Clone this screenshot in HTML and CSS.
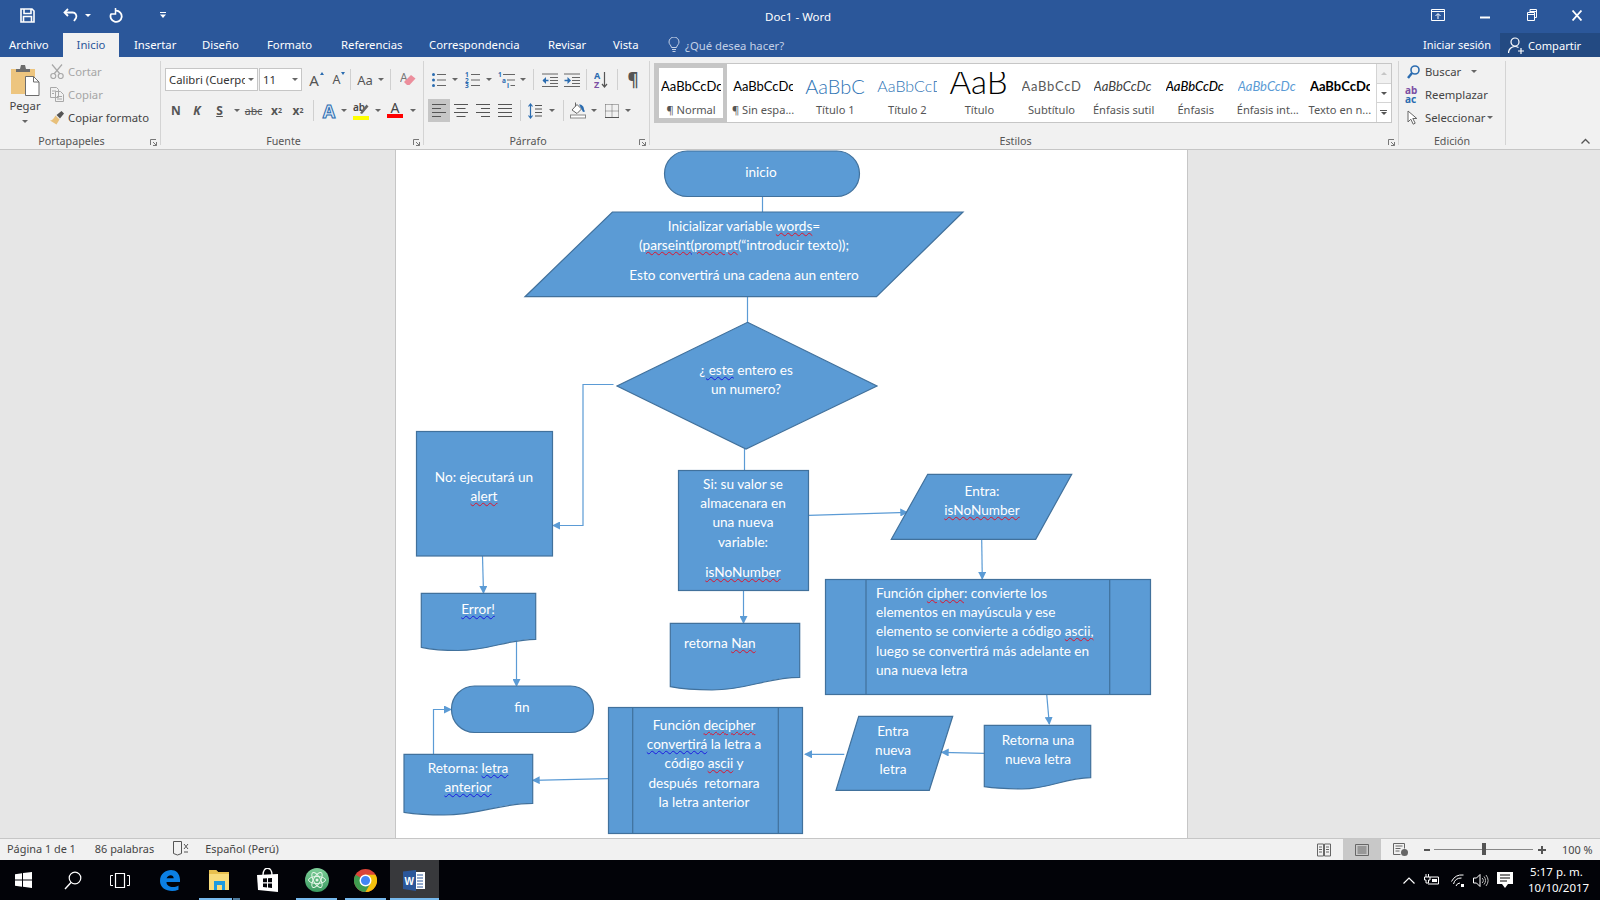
FILE: index.html
```html
<!DOCTYPE html>
<html>
<head>
  <meta charset="utf-8">
  <link rel="stylesheet" href="styles.css">
</head>
<body>
  <!-- Title bar -->
  <div class="titlebar">
    <div class="qat">
      <svg class="qat-save" width="15" height="15" viewBox="0 0 15 15"><path d="M1 1h11l2 2v11H1z M4 1v4.500h7V1 M3.500 14V8.500h8V14" fill="none" stroke="#fff" stroke-width="1.600"/></svg>
      <svg class="qat-undo" width="15" height="14" viewBox="0 0 15 14"><path d="M5 1L1.500 4.500 5 8" fill="none" stroke="#fff" stroke-width="1.800"/><path d="M2 4.500h7.500a3.800 3.800 0 0 1 3.500 5.500L11 13" fill="none" stroke="#fff" stroke-width="1.800"/></svg>
      <i class="caret caret-white qat-caret"></i>
      <svg class="qat-redo" width="14" height="15" viewBox="0 0 14 15"><path d="M7 2.700a5.600 5.600 0 1 1-5 3.300" fill="none" stroke="#fff" stroke-width="1.800"/><path d="M6.500 0v6H1.500" fill="none" stroke="#fff" stroke-width="1.500"/></svg>
      <svg class="qat-more" width="6" height="6" viewBox="0 0 6 6"><path d="M0 0.500h6" stroke="#fff"/><path d="M0 2.500h6L3 6z" fill="#fff"/></svg>
    </div>
    <div class="doc-title">Doc1 - Word</div>
    <div class="win-buttons">
      <svg width="14" height="12" viewBox="0 0 14 12"><path d="M0.500 0.500h13v11h-13z M0.500 2.500h13" fill="none" stroke="#fff"/><path d="M7 10V5M4.500 7L7 4.500 9.500 7" fill="none" stroke="#fff"/></svg>
      <svg class="win-min" width="10" height="10" viewBox="0 0 10 10"><path d="M0 7.500h10" stroke="#fff" stroke-width="2"/></svg>
      <svg class="win-max" width="10" height="12" viewBox="0 0 10 12"><path d="M0.500 3.500h7v8h-7z M0.500 5.500h7 M3 3.500v-3h6.500v8h-2 M3 2.500h6.500" fill="none" stroke="#fff"/></svg>
      <svg class="win-close" width="10" height="11" viewBox="0 0 10 11"><path d="M0.500 0.500l9 10M9.500 0.500l-9 10" stroke="#fff" stroke-width="1.800"/></svg>
    </div>
  </div>

  <!-- Tabs -->
  <div class="tabs">
    <span class="tab tab-archivo">Archivo</span>
    <span class="tab tab-active">Inicio</span>
    <span class="tab tab-insertar">Insertar</span>
    <span class="tab tab-diseno">Diseño</span>
    <span class="tab tab-formato">Formato</span>
    <span class="tab tab-refs">Referencias</span>
    <span class="tab tab-corr">Correspondencia</span>
    <span class="tab tab-revisar">Revisar</span>
    <span class="tab tab-vista">Vista</span>
    <span class="tell-me">
      <svg width="12" height="16" viewBox="0 0 12 16"><path d="M3.500 10.500C3 8 1 7.500 1 5a5 5 0 0 1 10 0c0 2.500-2 3-2.500 5.500z M4 12.500h4M4.500 14.500h3" fill="none" stroke="#c3d0e6"/></svg>
      ¿Qué desea hacer?
    </span>
    <span class="signin">Iniciar sesión</span>
    <span class="share">
      <svg width="16" height="17" viewBox="0 0 16 17"><circle cx="7" cy="5" r="4" fill="none" stroke="#fff" stroke-width="1.200"/><path d="M0.500 16c0-4 3-6.500 6.500-6.500 1.500 0 2.500.4 3.500 1M10 14h6M13 11v6" fill="none" stroke="#fff" stroke-width="1.200"/></svg>
      Compartir
    </span>
  </div>

  <!-- Ribbon -->
  <div class="ribbon">
    <div class="group group-clip">
      <div class="clip-body">
        <div class="paste">
          <svg width="30" height="31" viewBox="0 0 30 31"><path d="M1 4h24v25H1z" fill="#edc57f"/><path d="M6 4h4l1-4h4l1 4h4v3H6z" fill="#6d6d6d"/><path d="M15.500 11.500h8l5.500 5.500v13.500H15.500z" fill="#fff" stroke="#6d6d6d"/><path d="M23.500 11.500V17H29" fill="none" stroke="#6d6d6d"/></svg>
          <span class="paste-label">Pegar</span>
          <i class="caret"></i>
        </div>
        <div class="clip-list">
          <div class="clip-item clip-off">
            <svg width="14" height="15" viewBox="0 0 14 15"><path d="M2 0.500l8 9.500M12 0.500L4 10" stroke="#a8a8a8" stroke-width="1.200"/><circle cx="3.300" cy="12" r="2.500" fill="none" stroke="#a8a8a8" stroke-width="1.200"/><circle cx="10.700" cy="12" r="2.500" fill="none" stroke="#a8a8a8" stroke-width="1.200"/></svg>
            Cortar
          </div>
          <div class="clip-item clip-off">
            <svg width="14" height="15" viewBox="0 0 14 15"><path d="M0.500 0.500h6l2 2v8h-8z M5.500 4.500h5l3 3v7h-8z M2 4h4M2 6.500h2M7 9.500h5M7 12h5" fill="none" stroke="#a8a8a8"/></svg>
            Copiar
          </div>
          <div class="clip-item">
            <svg width="14" height="14" viewBox="0 0 14 14"><path d="M5.500 4.500l4 4-3 5L0 9.500c2 0 4-2 5.500-5z" fill="#e8c07a"/><path d="M6.500 4L11.500 0 14 2.500 10 7.500z" fill="#555"/></svg>
            Copiar formato
          </div>
        </div>
      </div>
      <div class="group-label">Portapapeles</div>
      <svg class="launcher" width="7" height="7" viewBox="0 0 7 7"><path d="M0.500 6V0.500H6" fill="none" stroke="#777"/><path d="M3 3l3.500 3.500M3 6.500h3.500V3" fill="none" stroke="#777"/></svg>
    </div>

    <div class="group group-font">
      <div class="tool-row font-row-1">
        <div class="combo">Calibri (Cuerpo<i class="combo-caret"></i></div>
        <div class="combo combo-size">11<i class="combo-caret"></i></div>
        <span class="cell glyph-a">A<i class="mini-up"></i></span>
        <span class="cell glyph-a glyph-small">A<i class="mini-down"></i></span>
        <span class="cell"><i class="tsep"></i></span>
        <span class="cell glyph-aa">Aa</span>
        <span class="cell"><i class="caret"></i></span>
        <span class="cell"><i class="tsep"></i></span>
        <span class="cell">
          <svg width="16" height="17" viewBox="0 0 16 17"><text x="0" y="11" class="ico-eraser">A</text><path d="M4 11l7-7 4.500 3.500-6 6.500H7z" fill="#ec8e9c"/></svg>
        </span>
      </div>
      <div class="tool-row font-row-2">
        <span class="cell fmt">N</span>
        <span class="cell fmt fmt-i">K</span>
        <span class="cell fmt fmt-u">S</span>
        <span class="cell"><i class="caret"></i></span>
        <span class="cell fmt-abc">abc</span>
        <span class="cell fmt fmt-sub">x<sub>2</sub></span>
        <span class="cell fmt fmt-sub">x<sup>2</sup></span>
        <span class="cell"><i class="tsep"></i></span>
        <span class="cell fmt-effect">A</span>
        <span class="cell"><i class="caret"></i></span>
        <span class="cell">
          <svg width="16" height="18" viewBox="0 0 16 18"><text x="0" y="9" class="ico-ab">ab</text><path d="M7 11l6.500-8.500 2 2L9 12z" fill="#666"/><rect x="0" y="14" width="16" height="4" fill="#ffff00"/></svg>
        </span>
        <span class="cell"><i class="caret"></i></span>
        <span class="cell color-a">A</span>
        <span class="cell"><i class="caret"></i></span>
      </div>
      <div class="group-label">Fuente</div>
      <svg class="launcher" width="7" height="7" viewBox="0 0 7 7"><path d="M0.500 6V0.500H6" fill="none" stroke="#777"/><path d="M3 3l3.500 3.500M3 6.500h3.500V3" fill="none" stroke="#777"/></svg>
    </div>

    <div class="group group-para">
      <div class="tool-row para-row-1">
        <span class="cell">
          <svg width="14" height="14" viewBox="0 0 14 14"><circle cx="1.500" cy="1.500" r="1.500" fill="#2b6cb0"/><circle cx="1.500" cy="7" r="1.500" fill="#2b6cb0"/><circle cx="1.500" cy="12.500" r="1.500" fill="#2b6cb0"/><path d="M5 1.500h9M5 7h9M5 12.500h9" stroke="#666"/></svg>
        </span>
        <span class="cell"><i class="caret"></i></span>
        <span class="cell">
          <svg width="15" height="16" viewBox="0 0 15 16"><text x="0" y="5" class="ico-num">1</text><text x="0" y="10.500" class="ico-num">2</text><text x="0" y="16" class="ico-num">3</text><path d="M6 2.500h9M6 8h9M6 13.500h9" stroke="#666"/></svg>
        </span>
        <span class="cell"><i class="caret"></i></span>
        <span class="cell">
          <svg width="17" height="16" viewBox="0 0 17 16"><text x="0" y="5" class="ico-num">1</text><text x="4" y="10.500" class="ico-num">a</text><text x="9" y="16" class="ico-num">i</text><path d="M5 2.500h12M9 8h8M12.500 13.500h4.500" stroke="#666"/></svg>
        </span>
        <span class="cell"><i class="caret"></i></span>
        <span class="cell"><i class="tsep"></i></span>
        <span class="cell">
          <svg width="16" height="14" viewBox="0 0 16 14"><path d="M0 1h16M8 4.500h8M8 7.500h8M8 10.500h8M0 13.500h16" stroke="#666"/><path d="M6.500 7.500H1" stroke="#2b6cb0" stroke-width="1.500"/><path d="M4 4L0.500 7.500 4 11z" fill="#2b6cb0"/></svg>
        </span>
        <span class="cell">
          <svg width="16" height="14" viewBox="0 0 16 14"><path d="M0 1h16M8 4.500h8M8 7.500h8M8 10.500h8M0 13.500h16" stroke="#666"/><path d="M0.500 7.500H5" stroke="#2b6cb0" stroke-width="1.500"/><path d="M3.500 4L7 7.500 3.500 11z" fill="#2b6cb0"/></svg>
        </span>
        <span class="cell"><i class="tsep"></i></span>
        <span class="cell">
          <svg width="14" height="18" viewBox="0 0 14 18"><text x="0" y="8" class="ico-sort-a">A</text><text x="0" y="17" class="ico-sort-z">Z</text><path d="M10.500 1v15M8 13l2.500 3 2.500-3" fill="none" stroke="#555" stroke-width="1.200"/></svg>
        </span>
        <span class="cell"><i class="tsep"></i></span>
        <span class="cell pilcrow">¶</span>
      </div>
      <div class="tool-row para-row-2">
        <span class="cell cell-on">
          <svg width="14" height="13" viewBox="0 0 14 13"><path d="M0 0.500h14M0 4.500h9M0 8.500h14M0 12.500h9" stroke="#555"/></svg>
        </span>
        <span class="cell">
          <svg width="14" height="13" viewBox="0 0 14 13"><path d="M0 0.500h14M2.500 4.500h9M0 8.500h14M2.500 12.500h9" stroke="#555"/></svg>
        </span>
        <span class="cell">
          <svg width="14" height="13" viewBox="0 0 14 13"><path d="M0 0.500h14M5 4.500h9M0 8.500h14M5 12.500h9" stroke="#555"/></svg>
        </span>
        <span class="cell">
          <svg width="14" height="13" viewBox="0 0 14 13"><path d="M0 0.500h14M0 4.500h14M0 8.500h14M0 12.500h14" stroke="#555"/></svg>
        </span>
        <span class="cell"><i class="tsep"></i></span>
        <span class="cell">
          <svg width="14" height="16" viewBox="0 0 14 16"><path d="M2.500 1v14M0.500 3.500l2-2.500 2 2.500M0.500 12.500l2 2.500 2-2.500" fill="none" stroke="#2b6cb0" stroke-width="1.200"/><path d="M7 2.500h7M7 6h7M7 9.500h7M7 13h7" stroke="#555"/></svg>
        </span>
        <span class="cell"><i class="caret"></i></span>
        <span class="cell"><i class="tsep"></i></span>
        <span class="cell">
          <svg width="16" height="17" viewBox="0 0 16 17"><path d="M2 8l5-5.500L11.500 7 7 11.500z" fill="#fff" stroke="#666"/><path d="M5.500 0.500v4" stroke="#666"/><path d="M9 2.500c3 0 5 2 5 5l1 2-2 .5-1.500-3z" fill="#2b6cb0"/><rect x="0.500" y="13" width="15" height="3" fill="#fff" stroke="#888"/></svg>
        </span>
        <span class="cell"><i class="caret"></i></span>
        <span class="cell">
          <svg width="14" height="14" viewBox="0 0 14 14"><path d="M0.500 0.500h13v13M0.500 0.500v13M7 0.500v13M0.500 7h13" fill="none" stroke="#666" stroke-dasharray="1 1"/><path d="M0 13.500h14" stroke="#555"/></svg>
        </span>
        <span class="cell"><i class="caret"></i></span>
      </div>
      <div class="group-label">Párrafo</div>
      <svg class="launcher" width="7" height="7" viewBox="0 0 7 7"><path d="M0.500 6V0.500H6" fill="none" stroke="#777"/><path d="M3 3l3.500 3.500M3 6.500h3.500V3" fill="none" stroke="#777"/></svg>
    </div>

    <div class="group group-styles">
      <div class="gallery">
        <div class="style-item style-on"><div class="preview">AaBbCcDc</div><div class="style-name">¶ Normal</div></div>
        <div class="style-item"><div class="preview">AaBbCcDc</div><div class="style-name">¶ Sin espa...</div></div>
        <div class="style-item"><div class="preview pv-t1">AaBbCc</div><div class="style-name">Título 1</div></div>
        <div class="style-item"><div class="preview pv-t2">AaBbCcD</div><div class="style-name">Título 2</div></div>
        <div class="style-item"><div class="preview pv-title">AaB</div><div class="style-name">Título</div></div>
        <div class="style-item"><div class="preview pv-sub">AaBbCcD</div><div class="style-name">Subtítulo</div></div>
        <div class="style-item"><div class="preview pv-subtle">AaBbCcDc</div><div class="style-name">Énfasis sutil</div></div>
        <div class="style-item"><div class="preview pv-emph">AaBbCcDc</div><div class="style-name">Énfasis</div></div>
        <div class="style-item"><div class="preview pv-int">AaBbCcDc</div><div class="style-name">Énfasis int...</div></div>
        <div class="style-item"><div class="preview pv-strong">AaBbCcDc</div><div class="style-name">Texto en n...</div></div>
        <div class="gallery-scroll">
          <span class="scroll-btn scroll-off"><i class="tri-up"></i></span>
          <span class="scroll-btn"><i class="caret"></i></span>
          <span class="scroll-btn"><i class="more-bar"></i><i class="caret"></i></span>
        </div>
      </div>
      <div class="group-label">Estilos</div>
      <svg class="launcher" width="7" height="7" viewBox="0 0 7 7"><path d="M0.500 6V0.500H6" fill="none" stroke="#777"/><path d="M3 3l3.500 3.500M3 6.500h3.500V3" fill="none" stroke="#777"/></svg>
    </div>

    <div class="group group-edit">
      <div class="edit-list">
        <div class="edit-item">
          <span class="edit-icon"><svg width="13" height="14" viewBox="0 0 13 14"><circle cx="8" cy="5" r="4" fill="none" stroke="#2b6cb0" stroke-width="1.600"/><path d="M5 8l-4 5" stroke="#2b6cb0" stroke-width="2.400"/></svg></span>
          Buscar<i class="caret edit-caret-wide"></i>
        </div>
        <div class="edit-item">
          <span class="edit-icon edit-ab"><b class="ab-top">ab</b><b class="ab-bottom">ac</b></span>
          Reemplazar
        </div>
        <div class="edit-item">
          <span class="edit-icon"><svg width="11" height="15" viewBox="0 0 11 15"><path d="M1 1v11l2.800-2.800 2.400 5 2-1-2.400-4.700h4z" fill="#fff" stroke="#666"/></svg></span>
          Seleccionar<i class="caret edit-caret"></i>
        </div>
      </div>
      <div class="group-label">Edición</div>
    </div>
    <svg class="collapse" width="9" height="6" viewBox="0 0 9 6"><path d="M0.500 5.500l4-4 4 4" fill="none" stroke="#555" stroke-width="1.300"/></svg>
  </div>

  <!-- Document area -->
  <div class="workspace">
    <div class="page">
      <svg class="diagram" width="791" height="688" viewBox="396 150 791 688">
        <defs>
          <marker id="arrow" markerWidth="8" markerHeight="8" refX="7" refY="4" orient="auto" markerUnits="userSpaceOnUse">
            <path d="M0 0L8 4 0 8z" fill="#5b9bd5"/>
          </marker>
        </defs>

        <g class="links">
          <path d="M762.5 196V212"/>
          <path d="M747.5 297V322"/>
          <path d="M744.5 449V470"/>
          <path d="M613.5 384.5H583V525.5H553" marker-end="url(#arrow)"/>
          <path d="M482.5 556L483.5 593" marker-end="url(#arrow)"/>
          <path d="M516.5 639V686" marker-end="url(#arrow)"/>
          <path d="M433.5 754V709.5H451" marker-end="url(#arrow)"/>
          <path d="M743.5 591V623" marker-end="url(#arrow)"/>
          <path d="M808.7 515.3L907.3 512.3" marker-end="url(#arrow)"/>
          <path d="M981.7 539.3L982.3 579" marker-end="url(#arrow)"/>
          <path d="M1046.7 694.3L1049.3 724" marker-end="url(#arrow)"/>
          <path d="M984 753.3L941.7 752.3" marker-end="url(#arrow)"/>
          <path d="M844.3 754.3H805" marker-end="url(#arrow)"/>
          <path d="M608 778.7L532.7 780.3" marker-end="url(#arrow)"/>
        </g>

        <g class="shapes">
          <rect x="664.5" y="151" width="195" height="45.5" rx="22.7"/>
          <path d="M612.4 212H963L876.5 296.7H525z"/>
          <path d="M747.5 322.3L877 386 746 449 617 386z"/>
          <rect x="416.5" y="431.5" width="136" height="124.5"/>
          <rect x="678.5" y="470.5" width="130" height="120"/>
          <path d="M927.7 474.3H1071.7L1035.7 539.3H891.3z"/>
          <path d="M421.3 593.3H535.7V639.3C506 639.5 490 650.5 458 650.5C444 650.5 432 649.5 421.3 647.3z"/>
          <path d="M670.3 623.3H799.7V677.3C766 677.5 748 690 712 690C696 690 682 689 670.3 686.7z"/>
          <rect x="825.5" y="579.5" width="325" height="115"/>
          <path d="M866 579.5V694.5M1109.7 579.5V694.5"/>
          <rect x="451.5" y="686" width="142" height="46.5" rx="23"/>
          <path d="M404 754.3H532.7V803.3C498 803.5 480 815 444 815C428 815 415 814 404 812.3z"/>
          <rect x="608.5" y="707.5" width="194" height="126"/>
          <path d="M632.7 707.5V833.5M778.3 707.5V833.5"/>
          <path d="M858.7 716.3H952.7L929.3 790.3H836z"/>
          <path d="M984.3 725.3H1090.7V777.7C1064 777.9 1050 789 1022 789C1008 789 996 788.5 984.3 786.7z"/>
        </g>
      </svg>

      <div class="label lb-center lb-inicio">inicio</div>
      <div class="label lb-center lb-init">
        Inicializar variable <span class="sp-r">words</span>=<br>
        (<span class="sp-r">parseint</span><span class="sp-b">(</span><span class="sp-r">prompt</span>(“introducir texto));
        <div class="gap"></div>
        Esto convertirá una cadena aun entero
      </div>
      <div class="label lb-center lb-diamond"><span class="sp-b">¿ este</span> entero es<br>un numero?</div>
      <div class="label lb-center lb-no">No: ejecutará un<br><span class="sp-r">alert</span></div>
      <div class="label lb-center lb-si">
        Si: su valor se<br>almacenara en<br>una nueva<br>variable:
        <div class="gap"></div>
        <span class="sp-r">isNoNumber</span>
      </div>
      <div class="label lb-center lb-entra">Entra:<br><span class="sp-r">isNoNumber</span></div>
      <div class="label lb-center lb-error"><span class="sp-b">Error!</span></div>
      <div class="label lb-nan">retorna <span class="sp-r">Nan</span></div>
      <div class="label lb-cipher">
        Función <span class="sp-r">cipher</span>: convierte los<br>
        elementos en mayúscula y ese<br>
        elemento se convierte a código <span class="sp-r">ascii,</span><br>
        luego se convertirá más adelante en<br>
        una nueva letra
      </div>
      <div class="label lb-center lb-fin">fin</div>
      <div class="label lb-center lb-retletra">Retorna: <span class="sp-b">letra</span><br><span class="sp-b">anterior</span></div>
      <div class="label lb-center lb-decipher">
        Función <span class="sp-r">decipher</span><br>
        <span class="sp-b">convertirá</span> la letra a<br>
        código <span class="sp-r">ascii</span> y<br>
        después&nbsp; retornara<br>
        la letra anterior
      </div>
      <div class="label lb-center lb-nueva">Entra<br>nueva<br>letra</div>
      <div class="label lb-center lb-retuna">Retorna una<br>nueva letra</div>
    </div>
  </div>

  <!-- Status bar -->
  <div class="statusbar">
    <span class="st-page">Página 1 de 1</span>
    <span class="st-words">86 palabras</span>
    <svg class="st-book" width="16" height="15" viewBox="0 0 16 15"><path d="M0.500 0.500h8v12l-4 1.500-4-1.500z" fill="none" stroke="#555"/><path d="M11 3l4 5M15 3l-4 5M11 11h4" stroke="#555"/></svg>
    <span class="st-lang">Español (Perú)</span>
    <div class="st-right">
      <span class="view-btn">
        <svg width="14" height="14" viewBox="0 0 14 14"><path d="M0.500 1h6v12h-6zM7.500 1h6v12h-6zM2 4h3M2 6.500h3M2 9h3M9 4h3M9 6.500h3M9 9h3" fill="none" stroke="#666"/></svg>
      </span>
      <span class="view-btn view-on">
        <svg width="14" height="12" viewBox="0 0 14 12"><path d="M0.500 0.500h13v11h-13zM2.500 3h9M2.500 5h9M2.500 7h9M2.500 9h9" fill="none" stroke="#666"/></svg>
      </span>
      <span class="view-btn">
        <svg width="15" height="13" viewBox="0 0 15 13"><path d="M0.500 0.500h11v5M0.500 0.500v11h7M2.500 3h7M2.500 5.500h5M2.500 8h4" fill="none" stroke="#666"/><circle cx="11.500" cy="9.500" r="3.500" fill="#666"/></svg>
      </span>
      <div class="zoom-slider">
        <i class="zoom-minus"></i>
        <div class="zoom-track"><i class="zoom-thumb"></i></div>
        <i class="zoom-plus"></i>
      </div>
      <span class="st-zoom">100 %</span>
    </div>
  </div>

  <!-- Taskbar -->
  <div class="taskbar">
    <svg class="tb-win" width="17" height="16" viewBox="0 0 17 16"><path d="M0 2.300l7-1v6.200H0zM8 1.100L17 0v7.500H8zM0 8.500h7v6.200l-7-1zM8 8.500h9V16l-9-1.200z" fill="#fff"/></svg>
    <svg class="tb-search" width="18" height="19" viewBox="0 0 18 19"><circle cx="11" cy="7" r="5.800" fill="none" stroke="#fff" stroke-width="1.200"/><path d="M7 11.500L1 18" stroke="#fff" stroke-width="1.400"/></svg>
    <svg class="tb-tasks" width="20" height="15" viewBox="0 0 20 15"><path d="M5.500 0.500h9v14h-9z" fill="none" stroke="#fff" stroke-width="1.200"/><path d="M3 2.500H0.500v10H3M17 2.500h2.500v10H17" fill="none" stroke="#fff"/></svg>
    <div class="tb-app tb-edge">
      <svg width="20" height="21" viewBox="0 0 20 21"><path d="M20 12H6.500c0 5 7 6.500 12 3.500v4.300C10 23 0 19.500 0 11 0 3.500 6 0 11 0c5.500 0 9.500 4 9 12z" fill="#0b7fe3"/><path d="M6.500 8.300h7.200C13.700 4.500 8.500 3.800 6.500 8.300z" fill="#020308"/></svg>
    </div>
    <div class="tb-app tb-files tb-running">
      <svg width="22" height="22" viewBox="0 0 22 22"><path d="M1 1h7l2 2h11v18H1z" fill="#f8dc7c"/><path d="M1 1h7l2 2h11v2H1z" fill="#e8c04e"/><path d="M6 12h11v9h-3v-5H9v5H6z" fill="#1d9be0"/></svg>
    </div>
    <div class="tb-app tb-store">
      <svg width="21" height="24" viewBox="0 0 21 24"><path d="M0 7l21-1v18L1 22z" fill="#fff"/><path d="M6 7c0-9 9-9 9 0" fill="none" stroke="#fff" stroke-width="1.400"/><path d="M6 10.500l4-.2v4H6zM11 10.300l4-.2v4.200h-4zM6 15.500h4v4l-4-.4zM11 15.500h4v4.500l-4-.4z" fill="#020308"/></svg>
    </div>
    <div class="tb-app tb-atom tb-running">
      <svg width="24" height="24" viewBox="0 0 24 24">
        <defs><linearGradient id="atomfill" x1="0" y1="0" x2="0" y2="1"><stop offset="0" stop-color="#7fd09a"/><stop offset="1" stop-color="#3a9a60"/></linearGradient></defs>
        <circle cx="12" cy="12" r="12" fill="url(#atomfill)"/>
        <g fill="none" stroke="#e4f6e8"><ellipse cx="12" cy="12" rx="8.500" ry="3.500"/><ellipse cx="12" cy="12" rx="8.500" ry="3.500" transform="rotate(60 12 12)"/><ellipse cx="12" cy="12" rx="8.500" ry="3.500" transform="rotate(120 12 12)"/></g>
        <circle cx="12" cy="12" r="1.500" fill="#e4f6e8"/>
      </svg>
    </div>
    <div class="tb-app tb-chrome tb-running">
      <svg width="23" height="23" viewBox="0 0 24 24"><circle cx="12" cy="12" r="12" fill="#db4437"/><path d="M12 12L1.600 6A12 12 0 0 0 12 24l5-8z" fill="#3f9c4f"/><path d="M12 6h10.400A12 12 0 0 1 12 24l5-8.500z" fill="#f4c20d"/><circle cx="12" cy="12" r="5.500" fill="#4285f4" stroke="#fff" stroke-width="1.500"/></svg>
    </div>
    <div class="tb-app tb-word">
      <svg width="22" height="21" viewBox="0 0 22 21"><path d="M12 2h10v17H12z" fill="#fff"/><path d="M14 5h6M14 8h6M14 11h6M14 14h6M14 17h6" stroke="#2b579a"/><path d="M0 1.500L13 0v21L0 19z" fill="#2b579a"/><text x="1.500" y="14.500" class="tb-word-w">W</text></svg>
    </div>
    <div class="tray">
      <svg width="12" height="7" viewBox="0 0 12 7"><path d="M0.500 6.500L6 1l5.500 5.500" fill="none" stroke="#fff" stroke-width="1.200"/></svg>
      <svg class="tray-battery" width="16" height="12" viewBox="0 0 16 12"><path d="M2 0v3M4.500 0v3M0.500 3h5.500v3H4.500v3H2V6H0.500zM6 3h8.500v7H4" fill="none" stroke="#fff"/><path d="M8 5h5v3H8z" fill="#fff"/></svg>
      <svg class="tray-wifi" width="13" height="13" viewBox="0 0 13 13"><path d="M0.500 7.500a12 12 0 0 1 12-6.500M2.500 10a8 8 0 0 1 8-6M5 12a4.500 4.500 0 0 1 4-3" fill="none" stroke="#fff"/><rect x="10" y="10" width="3" height="3" fill="#fff"/></svg>
      <svg class="tray-sound" width="16" height="13" viewBox="0 0 16 13"><path d="M0.500 4h3l3.500-3.500v12L3.500 9h-3z" fill="none" stroke="#fff"/><path d="M9 4a3 3 0 0 1 0 5M11 2.500a6 6 0 0 1 0 8M13 1a9 9 0 0 1 0 11" fill="none" stroke="#bbb"/></svg>
      <svg class="tray-action" width="16" height="16" viewBox="0 0 16 16"><path d="M0 0h16v12h-5l-3 4-3-4H0z" fill="#fff"/><path d="M3 3h10M3 6h10M3 9h7" stroke="#000"/></svg>
      <div class="clock">5:17 p. m.<br>10/10/2017</div>
    </div>
  </div>
</body>
</html>
```

FILE: styles.css
```css
* {
  box-sizing: border-box;
}

html, body {
  margin: 0;
  padding: 0;
  height: 900px;
  overflow: hidden;
}

body {
  width: 1600px;
  font-family: "Noto Sans", sans-serif;
  font-size: 11.3px;
  color: #444;
  background: #e6e6e6;
}

.caret {
  display: inline-block;
  width: 0;
  height: 0;
  border-left: 3px solid transparent;
  border-right: 3px solid transparent;
  border-top: 3px solid #666;
}

.caret-white {
  border-top-color: #fff;
}

/* title bar */
.titlebar {
  height: 33px;
  background: #2b579a;
  color: #fff;
  display: flex;
  align-items: center;
  position: relative;
  padding-bottom: 3px;
}

.qat {
  display: flex;
  align-items: center;
  padding-left: 20px;
}

.qat-undo {
  margin-left: 28px;
}

.qat-caret {
  margin-left: 7px;
}

.qat-redo {
  margin-left: 18px;
}

.qat-more {
  margin-left: 37px;
}

.doc-title {
  position: absolute;
  left: 765px;
  top: 9px;
  font-size: 11.5px;
}

.win-buttons {
  margin-left: auto;
  display: flex;
  align-items: center;
  padding-right: 18px;
}

.win-min {
  margin-left: 35px;
}

.win-max {
  margin-left: 37px;
}

.win-close {
  margin-left: 35px;
}

/* tabs */
.tabs {
  height: 24px;
  background: #2b579a;
  color: #fff;
  display: flex;
  align-items: stretch;
  line-height: 23px;
}

.tab {
  white-space: nowrap;
}

.tab-archivo {
  margin-left: 9px;
  width: 54px;
}

.tab-active {
  width: 56px;
  text-align: center;
  background: #f1f1f1;
  color: #2b579a;
}

.tab-insertar {
  margin-left: 15px;
  width: 68px;
}

.tab-diseno {
  width: 65px;
}

.tab-formato {
  width: 74px;
}

.tab-refs {
  width: 88px;
}

.tab-corr {
  width: 119px;
}

.tab-revisar {
  width: 65px;
}

.tab-vista {
  width: 55px;
}

.tell-me {
  color: #c3d0e6;
  display: flex;
  align-items: center;
  gap: 5px;
}

.signin {
  margin-left: auto;
  margin-right: 9px;
  font-size: 11px;
}

.share {
  width: 100px;
  background: #234a82;
  display: flex;
  align-items: center;
  gap: 4px;
  padding-left: 8px;
  font-size: 11.1px;
}

/* ribbon */
.ribbon {
  height: 93px;
  background: #f1f1f1;
  border-bottom: 1px solid #c6c6c6;
  padding-top: 4px;
  display: flex;
  position: relative;
}

.group {
  height: 84px;
  position: relative;
  display: flex;
  flex-direction: column;
  border-right: 1px solid #d4d4d4;
}

.group-label {
  margin-top: auto;
  margin-bottom: -4px;
  padding-right: 21px;
  height: 16px;
  line-height: 16px;
  text-align: center;
  font-size: 10.7px;
  color: #555;
}

.launcher {
  position: absolute;
  right: 3px;
  bottom: -1px;
}

.group-clip {
  width: 161px;
}

.group-clip .group-label {
  padding-right: 17px;
}

.group-font {
  width: 263px;
  padding-left: 4px;
}

.group-para {
  width: 226px;
  padding-left: 4px;
}

.group-styles {
  width: 749px;
  padding-left: 4px;
}

.group-edit {
  width: 107px;
}

.group-edit .group-label {
  padding-right: 0;
}

.clip-body {
  display: flex;
}

.paste {
  width: 50px;
  display: flex;
  flex-direction: column;
  align-items: center;
  padding-top: 4px;
}

.paste-label {
  margin-top: 2px;
  line-height: 16px;
}

.paste .caret {
  margin-top: 6px;
}

.clip-list {
  margin-top: -1px;
}

.clip-item {
  height: 23px;
  display: flex;
  align-items: center;
  gap: 4px;
  white-space: nowrap;
}

.clip-off {
  color: #a6a6a6;
}

.tool-row {
  display: grid;
  height: 23px;
  align-items: center;
}

.font-row-1 {
  margin-top: 7px;
  grid-template-columns: 93px 44px 24px 21px 7px 22px 9px 11px 24px;
}

.font-row-2 {
  margin-top: 8px;
  grid-template-columns: 22px 20px 25px 9px 25px 21px 22px 9px 22px 8px 26px 8px 26px 9px;
}

.para-row-1 {
  margin-top: 7px;
  grid-template-columns: 22px 10px 24px 10px 24px 9px 12px 21px 23px 6px 24px 8px 24px;
}

.para-row-2 {
  margin-top: 8px;
  grid-template-columns: 22px 22px 22px 22px 8px 22px 12px 10px 20px 12px 24px 8px;
}

.cell {
  height: 23px;
  display: flex;
  align-items: center;
  justify-content: center;
  position: relative;
  white-space: nowrap;
}

.cell-on {
  background: #c6c6c6;
}

.tsep {
  display: block;
  width: 1px;
  height: 21px;
  background: #d0d0d0;
}

.combo {
  height: 23px;
  background: #fff;
  border: 1px solid #c6c6c6;
  line-height: 21px;
  padding-left: 3px;
  position: relative;
  overflow: hidden;
  white-space: nowrap;
  color: #333;
}

.combo-size {
  width: 43px;
  margin-left: 1px;
}

.combo-caret {
  position: absolute;
  right: 0;
  top: 0;
  bottom: 0;
  width: 12px;
  background: #fff;
}

.combo-caret::after {
  content: "";
  position: absolute;
  left: 3px;
  top: 9px;
  border-left: 3px solid transparent;
  border-right: 3px solid transparent;
  border-top: 3px solid #666;
}

.glyph-a {
  font-size: 15px;
  color: #555;
}

.glyph-small {
  font-size: 12.5px;
}

.mini-up,
.mini-down {
  position: absolute;
  right: 2px;
  top: 4px;
  border-left: 2.5px solid transparent;
  border-right: 2.5px solid transparent;
}

.mini-up {
  border-bottom: 3px solid #2b6cb0;
}

.mini-down {
  border-top: 3px solid #2b6cb0;
}

.glyph-aa {
  font-size: 13px;
  color: #555;
}

.fmt {
  font-size: 12px;
  font-weight: 700;
  color: #555;
}

.fmt-i {
  font-style: italic;
}

.fmt-u {
  text-decoration: underline;
}

.fmt-abc {
  font-size: 10.5px;
  color: #555;
  text-decoration: line-through;
}

.fmt-sub sub,
.fmt-sub sup {
  font-size: 7px;
}

.fmt-effect {
  font-size: 18px;
  font-weight: 700;
  color: #dce8f5;
  -webkit-text-stroke: 1px #2b6cb0;
}

.color-a {
  font-size: 14px;
  line-height: 14px;
  color: #444;
  padding-bottom: 6px;
}

.color-a::after {
  content: "";
  position: absolute;
  left: 5px;
  right: 5px;
  bottom: 4px;
  height: 4px;
  background: #f00;
}

.pilcrow {
  font-size: 17px;
  font-weight: 700;
  color: #555;
}

.ico-eraser {
  font-family: "Noto Sans", sans-serif;
  font-size: 12px;
  fill: #777;
}

.ico-ab {
  font-family: "Noto Sans", sans-serif;
  font-size: 10px;
  font-weight: 600;
  fill: #444;
}

.ico-num {
  font-family: "Noto Sans", sans-serif;
  font-size: 6.5px;
  font-weight: 700;
  fill: #2b6cb0;
}

.ico-sort-a {
  font-family: "Noto Sans", sans-serif;
  font-size: 9px;
  font-weight: 700;
  fill: #2b6cb0;
}

.ico-sort-z {
  font-family: "Noto Sans", sans-serif;
  font-size: 9px;
  font-weight: 700;
  fill: #7b4fa3;
}

/* styles gallery */
.gallery {
  width: 738px;
  height: 60px;
  margin-top: 2px;
  background: #fff;
  border: 1px solid #c6c6c6;
  display: flex;
}

.style-item {
  width: 72.1px;
  flex: none;
  height: 58px;
  display: flex;
  flex-direction: column;
  align-items: center;
}

.style-on {
  box-shadow: inset 0 0 0 4px #c6c6c6;
}

.preview {
  width: 60px;
  height: 28px;
  margin-top: 8px;
  overflow: hidden;
  white-space: nowrap;
  text-align: left;
  line-height: 28px;
  font-family: "Lato", sans-serif;
  font-size: 13px;
  color: #000;
}

.pv-t1 {
  font-size: 20px;
  font-weight: 300;
  color: #2e74b5;
}

.pv-t2 {
  font-size: 16px;
  font-weight: 300;
  color: #2e74b5;
}

.pv-title {
  font-size: 33px;
  font-weight: 300;
  line-height: 18px;
}

.pv-sub {
  letter-spacing: 0.7px;
  color: #595959;
}

.pv-subtle {
  font-style: italic;
  color: #404040;
}

.pv-emph {
  font-style: italic;
  font-weight: 500;
}

.pv-int {
  font-style: italic;
  color: #5b9bd5;
}

.pv-strong {
  font-weight: 700;
}

.style-name {
  line-height: 16px;
  margin-top: 2px;
  white-space: nowrap;
  font-size: 11.1px;
  color: #555;
}

.gallery-scroll {
  flex: 1;
  display: flex;
  flex-direction: column;
  border-left: 1px solid #d4d4d4;
}

.scroll-btn {
  flex: 1;
  display: flex;
  flex-direction: column;
  align-items: center;
  justify-content: center;
  gap: 1px;
  border-bottom: 1px solid #d4d4d4;
}

.scroll-btn:last-child {
  border-bottom: 0;
}

.scroll-off {
  background: #f1f1f1;
}

.scroll-btn .caret {
  border-top-color: #555;
}

.tri-up {
  border-left: 3px solid transparent;
  border-right: 3px solid transparent;
  border-bottom: 3px solid #c6c6c6;
}

.more-bar {
  width: 7px;
  height: 1px;
  background: #555;
}

/* edit group */
.edit-list {
  margin-top: -1px;
}

.edit-item {
  height: 23px;
  display: flex;
  align-items: center;
  white-space: nowrap;
}

.edit-icon {
  width: 26px;
  padding-left: 8px;
  display: flex;
  align-items: center;
  flex: none;
}

.edit-ab {
  display: block;
  padding-left: 6px;
  font-size: 10px;
  line-height: 9px;
}

.ab-top {
  display: block;
  color: #7b4fa3;
}

.ab-bottom {
  display: block;
  color: #2b6cb0;
}

.edit-caret {
  margin-left: 2px;
}

.edit-caret-wide {
  margin-left: 10px;
}

.collapse {
  position: absolute;
  left: 1581px;
  top: 81px;
}

/* page */
.workspace {
  height: 688px;
  padding-left: 395px;
  background: #e6e6e6;
}

.page {
  width: 793px;
  height: 688px;
  background: #fff;
  border-left: 1px solid #c6c6c6;
  border-right: 1px solid #c6c6c6;
  position: relative;
  overflow: hidden;
}

.diagram {
  display: block;
}

.links path {
  fill: none;
  stroke: #5b9bd5;
  stroke-width: 1.2;
}

.shapes rect,
.shapes path {
  fill: #5b9bd5;
  stroke: #41719c;
  stroke-width: 1.2;
}

.label {
  position: absolute;
  white-space: nowrap;
  color: #fff;
  font-family: "Lato", sans-serif;
  font-size: 13.6px;
  line-height: 19.2px;
}

.lb-center {
  text-align: center;
  transform: translateX(-50%);
}

.gap {
  height: 11px;
}

.sp-r {
  text-decoration: underline wavy #e0142c 1px;
}

.sp-b {
  text-decoration: underline wavy #1a1ae0 1px;
}

.lb-inicio { left: 365px; top: 13px; }
.lb-init { left: 348px; top: 67px; }
.lb-diamond { left: 350px; top: 211px; }
.lb-no { left: 88px; top: 318px; }
.lb-si { left: 347px; top: 325px; }
.lb-entra { left: 586px; top: 332px; }
.lb-error { left: 82px; top: 450px; }
.lb-nan { left: 288px; top: 484px; }
.lb-cipher { left: 480px; top: 434px; }
.lb-fin { left: 126px; top: 548px; }
.lb-retletra { left: 72px; top: 609px; }
.lb-decipher { left: 308px; top: 566px; }
.lb-nueva { left: 497px; top: 572px; }
.lb-retuna { left: 642px; top: 581px; }

/* status bar */
.statusbar {
  height: 22px;
  background: #f1f1f1;
  border-top: 1px solid #c6c6c6;
  display: flex;
  align-items: flex-start;
  font-size: 10.9px;
  line-height: 19px;
  color: #444;
}

.st-page {
  margin-left: 7px;
}

.st-words {
  margin-left: 19px;
}

.st-book {
  margin-left: 19px;
  margin-top: 2px;
}

.st-lang {
  margin-left: 16px;
}

.st-right {
  margin-left: auto;
  display: flex;
  align-items: center;
  height: 21px;
}

.view-btn {
  width: 38px;
  height: 21px;
  display: flex;
  align-items: center;
  justify-content: center;
}

.view-on {
  background: #c8c8c8;
}

.zoom-slider {
  display: flex;
  align-items: center;
  margin-left: 5px;
}

.zoom-minus {
  width: 6px;
  height: 2px;
  background: #555;
}

.zoom-track {
  width: 99px;
  height: 1px;
  margin: 0 5px 0 4px;
  background: #888;
  position: relative;
}

.zoom-thumb {
  position: absolute;
  left: 48px;
  top: -6px;
  width: 4px;
  height: 12px;
  background: #555;
}

.zoom-plus {
  width: 8px;
  height: 8px;
  background: linear-gradient(#555, #555) center / 8px 2px no-repeat, linear-gradient(#555, #555) center / 2px 8px no-repeat;
}

.st-zoom {
  width: 29px;
  margin-left: 16px;
  margin-right: 9px;
  white-space: nowrap;
}

/* taskbar */
.taskbar {
  height: 40px;
  background: #020308;
  display: flex;
  align-items: center;
  color: #fff;
}

.tb-win {
  margin-left: 15px;
}

.tb-search {
  margin-left: 32px;
}

.tb-tasks {
  margin-left: 28px;
}

.tb-app {
  width: 48.8px;
  height: 40px;
  flex: none;
  position: relative;
  display: flex;
  align-items: center;
  justify-content: center;
}

.tb-edge {
  margin-left: 16px;
}

.tb-running::after {
  content: "";
  position: absolute;
  left: 4px;
  right: 4px;
  bottom: 0;
  height: 2px;
  background: #76b9ed;
}

.tb-files::after {
  background: linear-gradient(90deg, #76b9ed 80%, #020308 80%, #020308 82%, #4f7c9e 82%);
}

.tb-word {
  background: #38393c;
}

.tb-word::after {
  content: "";
  position: absolute;
  left: 0;
  right: 0;
  bottom: 0;
  height: 2px;
  background: #76b9ed;
}

.tb-word-w {
  font-family: "Liberation Sans", sans-serif;
  font-size: 10px;
  font-weight: 700;
  fill: #fff;
}

.tray {
  margin-left: auto;
  display: flex;
  align-items: center;
  padding-right: 15px;
}

.tray-battery {
  margin-left: 9px;
}

.tray-wifi {
  margin-left: 11px;
}

.tray-sound {
  margin-left: 9px;
}

.tray-action {
  margin-left: 8px;
}

.clock {
  margin-left: 15px;
  width: 57px;
  text-align: center;
  font-size: 11.5px;
  line-height: 16px;
  white-space: nowrap;
}
```
